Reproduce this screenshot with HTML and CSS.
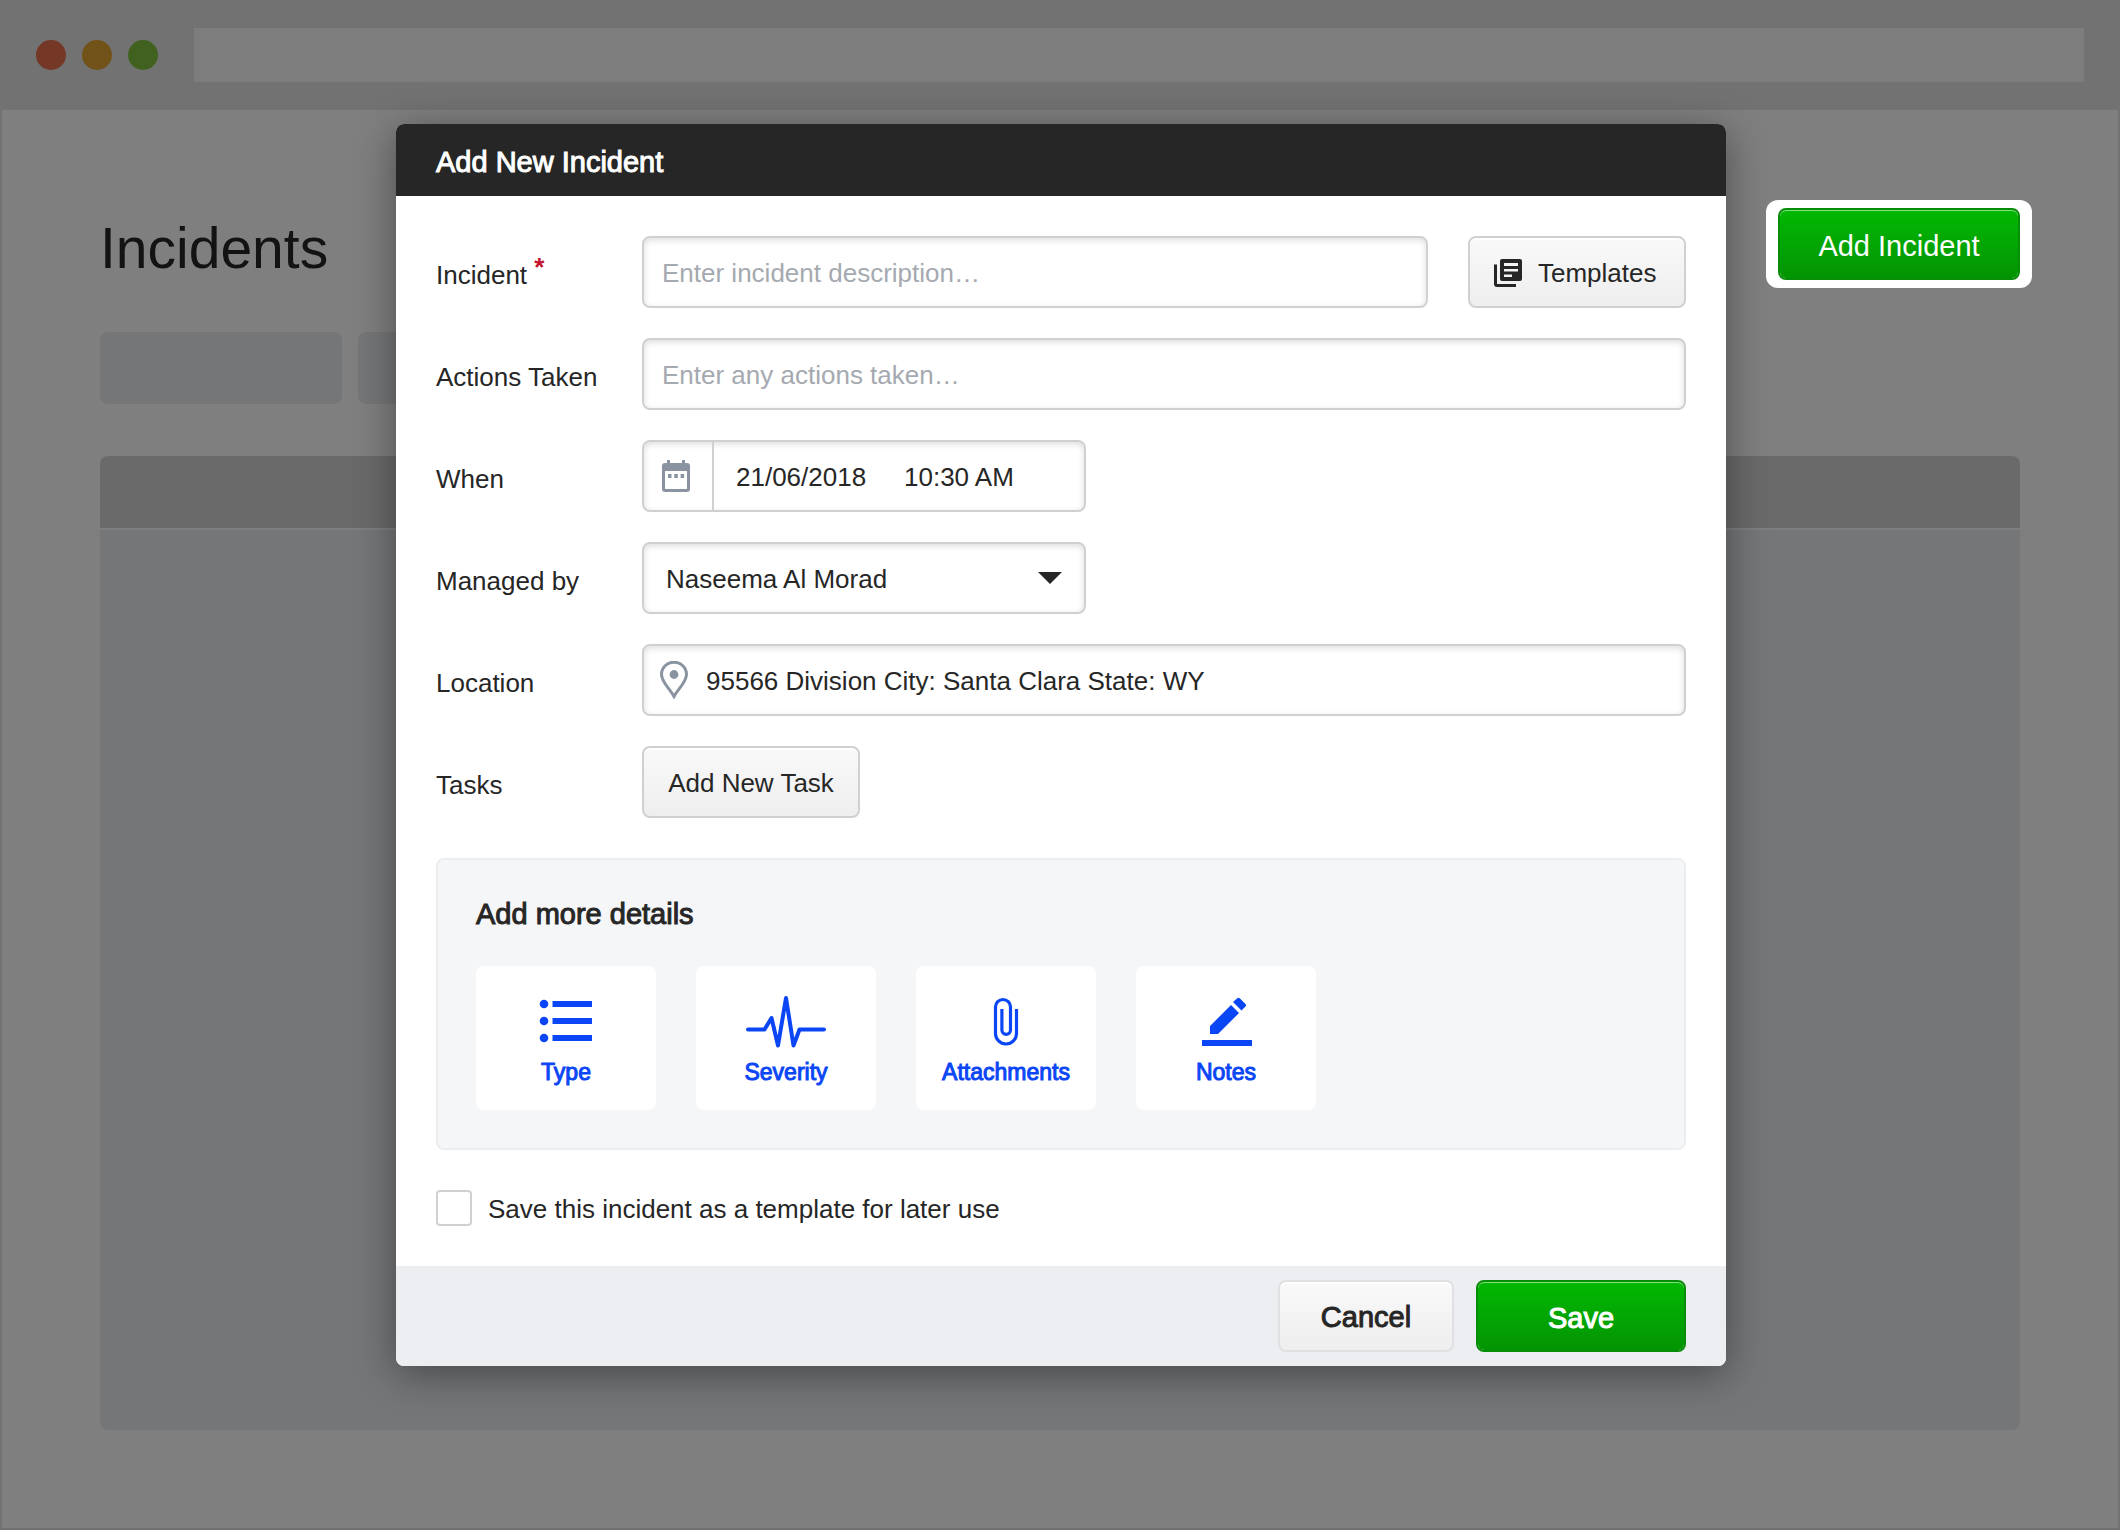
FILE: index.html
```html
<!DOCTYPE html>
<html lang="en">
<head>
<meta charset="utf-8">
<meta name="viewport" content="width=device-width, initial-scale=1">
<title>Incidents</title>
<link rel="stylesheet" href="styles.css">
</head>
<body>
<div class="window">
  <header class="chrome">
    <div class="dots">
      <span class="dot dot-close"></span>
      <span class="dot dot-min"></span>
      <span class="dot dot-max"></span>
    </div>
    <div class="address"></div>
  </header>
  <main class="page">
    <div class="page-head">
      <h1>Incidents</h1>
      <div class="spotlight"><button type="button" class="btn btn-primary btn-add">Add Incident</button></div>
    </div>
    <div class="filters">
      <div class="filter"></div>
      <div class="filter"></div>
    </div>
    <div class="list">
      <div class="list-head"></div>
      <div class="list-body"></div>
    </div>
  </main>
</div>

<div class="overlay">
  <form class="modal" role="dialog" aria-labelledby="modal-title">
    <h2 class="modal-head" id="modal-title">Add New Incident</h2>
    <div class="modal-body">
      <div class="fields">
        <div class="row">
          <label class="label" for="incident">Incident <span class="required">*</span></label>
          <div class="with-button">
            <input class="field" id="incident" type="text" placeholder="Enter incident description…">
            <button type="button" class="btn btn-light btn-templates">
              <svg class="icon-templates" viewBox="0 0 28 28" aria-hidden="true">
                <path d="M1.500 5.500V25q0 1.500 1.500 1.500H22" fill="none" stroke="#262626" stroke-width="3"/>
                <path fill-rule="evenodd" fill="#262626" d="M8 0H26Q28 0 28 2V20Q28 22 26 22H8Q6 22 6 20V2Q6 0 8 0ZM10 4V7H24V4ZM10 10V12.500H24V10ZM10 15.500V18H18V15.500Z"/>
              </svg>
              Templates
            </button>
          </div>
        </div>
        <div class="row">
          <label class="label" for="actions">Actions Taken</label>
          <input class="field" id="actions" type="text" placeholder="Enter any actions taken…">
        </div>
        <div class="row">
          <label class="label" for="date">When</label>
          <div class="field half when">
            <span class="when-icon">
              <svg class="icon-calendar" viewBox="0 0 28 32" aria-hidden="true">
                <path fill="#8a93a0" fill-rule="evenodd" d="M5 0H8V3H20V0H23V3H25Q28 3 28 6V29Q28 32 25 32H3Q0 32 0 29V6Q0 3 3 3H5ZM3 11V29H25V11Z"/>
                <path fill="#8a93a0" d="M6 14h3.500v4H6zM12.300 14h3.500v4h-3.500zM18.600 14h3.500v4h-3.500z"/>
              </svg>
            </span>
            <input class="bare date" id="date" type="text" value="21/06/2018">
            <input class="bare time" type="text" value="10:30 AM" aria-label="Time">
          </div>
        </div>
        <div class="row">
          <label class="label" for="manager">Managed by</label>
          <div class="half picker">
            <select class="field" id="manager"><option>Naseema Al Morad</option></select>
            <svg class="arrow" viewBox="0 0 24 12" aria-hidden="true"><path fill="#262626" d="M0 0H24L12 12Z"/></svg>
          </div>
        </div>
        <div class="row">
          <label class="label" for="location">Location</label>
          <div class="field place">
            <svg class="icon-pin" viewBox="0 0 28 38" aria-hidden="true">
              <path fill="none" stroke="#8a93a0" stroke-width="3" d="M14 35.500C10 28 1.500 21 1.500 13.500A12.500 12.300 0 0 1 26.500 13.500C26.500 21 18 28 14 35.500Z"/>
              <circle cx="14" cy="13.500" r="4.400" fill="#8a93a0"/>
            </svg>
            <input class="bare" id="location" type="text" value="95566 Division City: Santa Clara State: WY">
          </div>
        </div>
        <div class="row">
          <span class="label">Tasks</span>
          <button type="button" class="btn btn-light btn-task">Add New Task</button>
        </div>
      </div>

      <section class="more">
        <h3>Add more details</h3>
        <div class="tiles">
          <button type="button" class="tile">
            <svg viewBox="0 0 80 54" aria-hidden="true"><g fill="#0a46f5"><circle cx="18" cy="12" r="4.300"/><circle cx="18" cy="29" r="4.300"/><circle cx="18" cy="46" r="4.300"/><path d="M26.500 9H66v6H26.500zM26.500 26H66v6H26.500zM26.500 43H66v6H26.500z"/></g></svg>
            Type
          </button>
          <button type="button" class="tile">
            <svg viewBox="0 0 80 54" aria-hidden="true"><path d="M2 37.500H18.500L25.500 26L32 53.500L40 6L47.500 53.500L53.500 37.500H78" fill="none" stroke="#0a46f5" stroke-width="4" stroke-linecap="round" stroke-linejoin="round"/></svg>
            Severity
          </button>
          <button type="button" class="tile">
            <svg viewBox="0 0 80 54" aria-hidden="true"><path d="M50.500 17V41.500a10.500 10.500 0 0 1 -21 0V15a7.500 7.500 0 0 1 15 0V38a4.300 4.300 0 0 1 -8.600 0V17" fill="none" stroke="#0a46f5" stroke-width="3.200"/></svg>
            Attachments
          </button>
          <button type="button" class="tile">
            <svg viewBox="0 0 80 54" aria-hidden="true"><g fill="#0a46f5"><path d="M16 48H66v6H16z"/><path d="M24 42V34L45 13L53 21L32 42zM47 10L51 6.500Q52.500 5 54 6.500L59.500 12Q60.500 13 59.500 14.500L55.500 18.500z"/></g></svg>
            Notes
          </button>
        </div>
      </section>

      <label class="save-template"><input type="checkbox"> <span>Save this incident as a template for later use</span></label>
    </div>
    <footer class="modal-foot">
      <button type="button" class="btn btn-light btn-cancel">Cancel</button>
      <button type="submit" class="btn btn-primary btn-save">Save</button>
    </footer>
  </form>
</div>
</body>
</html>
```
FILE: styles.css
```css
* { box-sizing: border-box; }

body {
  margin: 0;
  font-family: "Liberation Sans", Arial, sans-serif;
  font-size: 26px;
  line-height: 32px;
  color: #262626;
  background: #e4e4e4;
}

h1, h2, h3 { margin: 0; font-weight: normal; }

input, select, button { font: inherit; color: inherit; }

/* Browser window and the page behind the dialog */
.window { min-height: 100vh; display: flex; flex-direction: column; }

.chrome {
  display: flex;
  align-items: center;
  gap: 36px;
  height: 110px;
  padding: 0 36px;
  background: #e4e4e4;
}

.dots { display: flex; gap: 16px; }
.dot { width: 30px; height: 30px; border-radius: 50%; }
.dot-close { background: #ea6e4c; }
.dot-min { background: #e2a632; }
.dot-max { background: #80c43c; }
.address { flex: 1; height: 54px; background: #fafafa; }

.page {
  flex: 1;
  display: flex;
  flex-direction: column;
  padding: 90px 98px 98px;
  border: solid #e4e4e4;
  border-width: 0 2px 2px;
  background: #fff;
}

.page-head {
  display: flex;
  justify-content: space-between;
  align-items: center;
  height: 88px;
  margin: 0 -12px 44px 0;
}

.page-head h1 { padding-top: 8px; font-size: 57px; line-height: 64px; }

.spotlight {
  position: relative;
  z-index: 2;
  padding: 8px 12px;
  border-radius: 12px;
  background: #fff;
}

.filters { display: flex; gap: 16px; margin-bottom: 52px; }
.filter { width: 242px; height: 72px; border-radius: 8px; background: #eaedf0; }

.list {
  flex: 1;
  display: flex;
  flex-direction: column;
  gap: 2px;
  border-radius: 8px;
  overflow: hidden;
}
.list-head { height: 72px; background: #d4d4d4; }
.list-body { flex: 1; background: #eaedf0; }

/* Buttons */
.btn {
  height: 72px;
  padding: 2px 0 0;
  border: 2px solid #cfd0d2;
  border-radius: 8px;
}
.btn-light { background: linear-gradient(#f9f9f9, #eee); box-shadow: inset 0 2px #fff; }
.btn-primary {
  padding-top: 4px;
  font-size: 29px;
  color: #fff;
  border-color: #088d08;
  background: linear-gradient(#03b803, #039403) padding-box;
  box-shadow: inset 0 1px #7fe07f;
}
.btn-add { width: 242px; }
.btn-templates {
  display: flex;
  align-items: center;
  gap: 16px;
  width: 218px;
  padding: 2px 0 0 24px;
}
.btn-task { width: 218px; }
.btn-cancel { width: 176px; font-size: 29px; border-color: #dfe0e2; }
.btn-save { width: 210px; }
.btn-cancel, .btn-save { -webkit-text-stroke: 1px; }

/* Dialog */
.overlay {
  position: absolute;
  inset: 0;
  z-index: 1;
  display: flex;
  justify-content: center;
  align-items: flex-start;
  padding: 124px 40px 40px 42px;
  background: rgba(0, 0, 0, .5);
}

.modal {
  width: 100%;
  max-width: 1330px;
  border-radius: 8px;
  overflow: hidden;
  background: #fff;
  box-shadow: 0 8px 40px rgba(0, 0, 0, .4);
}

.modal-head {
  padding: 22px 40px 18px;
  font-size: 29px;
  color: #fff;
  background: #262626;
  -webkit-text-stroke: 1px;
}

.modal-body { display: flex; flex-direction: column; gap: 40px; padding: 40px; }

.fields { display: flex; flex-direction: column; gap: 30px; }

.row { display: grid; grid-template-columns: 206px 1fr; align-items: center; justify-items: start; }
.label { padding-top: 6px; }
.required { position: relative; top: -8px; font-weight: bold; color: #c4122f; }

.field {
  width: 100%;
  height: 72px;
  padding: 2px 18px 0;
  border: 2px solid #cfd0d2;
  border-radius: 8px;
  background: #fff;
  box-shadow: inset 0 2px 6px rgba(0, 0, 0, .14);
}
.field::placeholder { color: #a5a9b0; opacity: 1; }
.half { width: 444px; }

.with-button { display: flex; gap: 40px; width: 100%; }
.with-button .field { flex: 1; min-width: 0; }

.bare { border: 0; padding: 2px 0 0; background: transparent; min-width: 0; }

.when { display: flex; align-items: center; padding: 0; }
.when-icon {
  display: flex;
  align-items: center;
  align-self: stretch;
  width: 70px;
  margin-right: 22px;
  padding-left: 18px;
  border-right: 2px solid #cfd0d2;
}
.date { width: 168px; }
.time { width: 140px; }

.picker { display: grid; align-items: center; }
.picker > * { grid-area: 1 / 1; }
.picker select { appearance: none; padding: 2px 22px 0; }
.arrow { justify-self: end; width: 24px; height: 12px; margin-right: 24px; pointer-events: none; }

.place { display: flex; align-items: center; gap: 18px; padding: 0 16px; }
.place .bare { flex: 1; }

.icon-templates { width: 28px; height: 28px; }
.icon-calendar { width: 28px; height: 32px; }
.icon-pin { width: 28px; height: 38px; }

/* Extra details */
.more { padding: 38px; border: 2px solid #ecedef; border-radius: 8px; background: #f5f6f8; }
.more h3 { margin-bottom: 36px; font-size: 29px; -webkit-text-stroke: 1px; }
.tiles { display: flex; flex-wrap: wrap; gap: 40px; }
.tile {
  display: flex;
  flex-direction: column;
  align-items: center;
  gap: 10px;
  width: 180px;
  height: 144px;
  padding: 26px 0 0;
  border: 0;
  border-radius: 8px;
  font-size: 23px;
  color: #0a46f5;
  background: #fff;
  -webkit-text-stroke: 1px;
}
.tile svg { width: 80px; height: 54px; overflow: visible; }

.save-template { display: flex; align-items: center; gap: 16px; }
.save-template span { padding-top: 2px; }
.save-template input {
  appearance: none;
  width: 36px;
  height: 36px;
  margin: 0;
  border: 2px solid #cfd0d2;
  border-radius: 4px;
  background: #fff;
}

.modal-foot {
  display: flex;
  justify-content: flex-end;
  gap: 22px;
  padding: 14px 40px;
  background: #edeef2;
}
```
